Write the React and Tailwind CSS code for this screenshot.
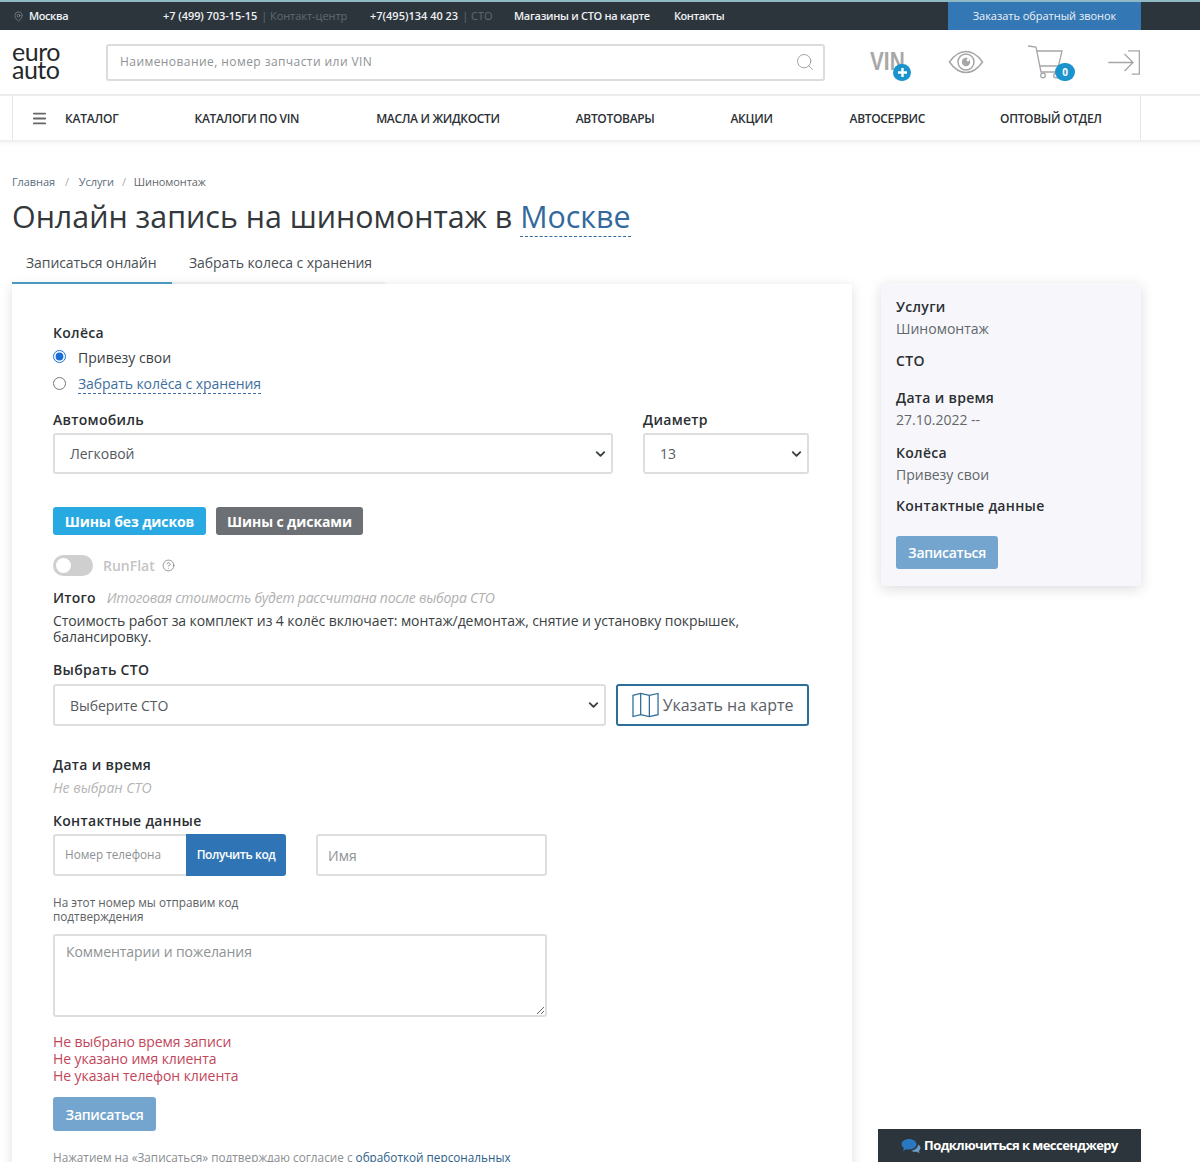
import React from "react";
import { Search, MapPin, CircleHelp, Menu, ChevronDown } from "lucide-react";

const Font = "font-['Open_Sans','Noto_Sans',sans-serif]";

function TopBar() {
  return (
    <div className="h-[30px] bg-[#2d353c] border-t-2 border-[#8fb9c4] flex text-[11px] font-semibold text-[#eef1f3]">
      <div className="flex items-center w-[163px] pl-[13px] gap-[5px] tracking-[-0.4px]">
        <MapPin size={11} strokeWidth={1.2} className="text-[#9aa3a9]" />
        <span>Москва</span>
      </div>
      <div className="flex items-center w-[207px] gap-[4px] tracking-[-0.06px]">
        <span>+7 (499) 703-15-15</span>
        <span className="font-normal text-[#5f6b73] tracking-[-0.05px]">| Контакт-центр</span>
      </div>
      <div className="flex items-center w-[144px] gap-[4px] tracking-[0px]">
        <span>+7(495)134 40 23</span>
        <span className="font-normal text-[#5f6b73]">| СТО</span>
      </div>
      <div className="flex items-center w-[160px] tracking-[-0.3px]">Магазины и СТО на карте</div>
      <div className="flex items-center w-[274px] tracking-[-0.45px]">Контакты</div>
      <div className="flex items-center justify-center w-[193px] bg-[#3377b5] font-normal tracking-[-0.03px]">Заказать обратный звонок</div>
    </div>
  );
}

function Header() {
  return (
    <div className="h-[66px] flex items-center bg-white border-b-2 border-[#eceded]">
      <div className="w-[106px] pl-[12px] font-['Lato',sans-serif] text-[25px] leading-[18px] text-[#26292b] tracking-[-0.5px] pb-[5px]">
        <div>euro</div>
        <div>auto</div>
      </div>
      <div className="w-[719px] h-[37px] border-2 border-[#dcdcdc] rounded-[3px] flex items-center justify-between pl-[12px] pr-[8px]">
        <span className="text-[12px] text-[#8e9295] tracking-[0.43px]">Наименование, номер запчасти или VIN</span>
        <Search size={20} strokeWidth={1.1} className="text-[#9a9a9a]" />
      </div>
      <div className="relative ml-[45px] w-[40px] h-[36px] font-['Liberation_Sans',sans-serif] font-bold text-[26px] leading-[34px] text-[#a8a8a8]">
        <span className="inline-block scale-x-[0.8] origin-left">VIN</span>
        <div className="absolute left-[23px] top-[20px] w-[18px] h-[17px] rounded-full bg-[#1b93cc] flex items-center justify-center">
          <svg width="11" height="11" viewBox="0 0 11 11"><path d="M5.5 1v9M1 5.5h9" stroke="#fff" strokeWidth="2.4" /></svg>
        </div>
      </div>
      <svg className="ml-[38px]" width="36" height="26" viewBox="0 0 36 26" fill="none" stroke="#a6a6a6" strokeWidth="1.5">
        <path d="M1.5 13C7 5 12 2.500 18 2.500S29 5 34.500 13C29 21 24 23.500 18 23.500S7 21 1.500 13Z" />
        <circle cx="18" cy="13" r="8" />
        <circle cx="18" cy="13" r="4.200" fill="#a6a6a6" stroke="none" />
        <circle cx="20" cy="11" r="1.400" fill="#fff" stroke="none" />
      </svg>
      <div className="relative ml-[44px] w-[36px] h-[34px]">
        <svg width="36" height="34" viewBox="0 0 36 34" fill="none" stroke="#a6a6a6" strokeWidth="1.3">
          <path d="M0 1l8 1 5 25h18" />
          <path d="M9 6h25l-3.500 15H12" />
          <circle cx="15" cy="30.500" r="2.300" />
          <circle cx="28" cy="30.500" r="2.300" />
        </svg>
        <div className="absolute left-[27px] top-[18px] w-[20px] h-[18px] rounded-full bg-[#1b93cc] text-white text-[10px] font-bold flex items-center justify-center">0</div>
      </div>
      <svg className="ml-[43px]" width="35" height="27" viewBox="0 0 38 30" fill="none" stroke="#a6a6a6" strokeWidth="1.4">
        <path d="M1 15h27M19 5.500L28.500 15 19 24.500" />
        <path d="M23 2h12.500v26H27" />
      </svg>
    </div>
  );
}

function Nav() {
  const items = [
    ["КАТАЛОГИ ПО VIN", "ml-[76px]"],
    ["МАСЛА И ЖИДКОСТИ", "ml-[77px]"],
    ["АВТОТОВАРЫ", "ml-[76px]"],
    ["АКЦИИ", "ml-[76px]"],
    ["АВТОСЕРВИС", "ml-[77px]"],
    ["ОПТОВЫЙ ОТДЕЛ", "ml-[75px]"],
  ];
  return (
    <div className="h-[46px] flex border-b-2 border-[#f0f0f0] shadow-[0_2px_4px_rgba(0,0,0,0.04)] text-[12px] font-semibold text-[#2c3034] tracking-[-0.33px]">
      <div className="ml-[12px] flex items-center border-l border-[#e6e6e6] w-[1129px] border-r pt-[1px]">
        <Menu size={17} strokeWidth={2.5} className="ml-[18px] text-[#666]" />
        <span className="ml-[17px] tracking-[-0.2px]">КАТАЛОГ</span>
        {items.map(([t, c]) => (
          <span key={t} className={c}>{t}</span>
        ))}
      </div>
    </div>
  );
}

const Label = ({ children, className = "" }) => (
  <div className={`text-[14px] font-semibold text-[#2b2f33] leading-[18px] tracking-[0.3px] ${className}`}>{children}</div>
);

const Select = ({ children, className = "", h = "h-[41px]" }) => (
  <div className={`relative ${className}`}>
    <select className={`block w-full ${h} appearance-none border-2 border-[#dedede] rounded-[3px] pl-[15px] pr-[20px] bg-white text-[#555a5f] tracking-[-0.05px]`}>
      {children}
    </select>
    <ChevronDown size={15} strokeWidth={3} className="absolute right-[5px] top-1/2 -translate-y-1/2 text-[#3a3f44] pointer-events-none" />
  </div>
);

function Form() {
  return (
    <div className="w-[840px] bg-white rounded-[3px] shadow-[0_2px_12px_rgba(0,0,0,0.13)] pl-[41px] pr-[42px] pt-[40px] h-[900px] text-[#3a3f44] text-[14px]">
      <Label>Колёса</Label>
      <label className="mt-[5px] flex items-center h-[20px]">
        <input type="radio" name="w" defaultChecked className="w-[13px] h-[13px] ml-0 accent-[#1a6fd6] -mt-[2px]" />
        <span className="ml-[12px]">Привезу свои</span>
      </label>
      <label className="mt-[7px] flex items-center h-[20px]">
        <input type="radio" name="w" className="w-[13px] h-[13px] -mt-[2px]" />
        <span className="ml-[12px] text-[#3f6f9e] border-b border-dashed border-[#3f6f9e] leading-[18px] tracking-[-0.08px]">Забрать колёса с хранения</span>
      </label>
      <div className="mt-[17px] flex gap-[30px]">
        <div className="w-[560px]">
          <Label>Автомобиль</Label>
          <Select className="mt-[4px]"><option>Легковой</option></Select>
        </div>
        <div className="w-[166px]">
          <Label>Диаметр</Label>
          <Select className="mt-[4px]"><option>13</option></Select>
        </div>
      </div>
      <div className="mt-[33px] flex gap-[10px] text-[14px] font-bold text-white tracking-[-0.1px]">
        <button className="h-[28px] w-[153px] rounded-[3px] bg-[#29a9e2]">Шины без дисков</button>
        <button className="h-[28px] w-[147px] rounded-[3px] bg-[#6c7074]">Шины с дисками</button>
      </div>
      <div className="mt-[19px] flex items-center h-[22px] text-[#c4c4c4] font-semibold">
        <div className="w-[40px] h-[21px] rounded-full bg-[#cfcfcf] relative">
          <div className="absolute left-[3px] top-[3px] w-[15px] h-[15px] rounded-full bg-white"></div>
        </div>
        <span className="ml-[10px]">RunFlat</span>
        <CircleHelp size={13} strokeWidth={1.4} className="ml-[7px] text-[#777]" />
      </div>
      <div className="mt-[11px] flex items-center h-[20px]">
        <span className="font-semibold text-[#2b2f33] tracking-[0.2px]">Итого</span>
        <span className="ml-[11px] italic text-[#b0b0b0] tracking-[-0.23px]">Итоговая стоимость будет рассчитана после выбора СТО</span>
      </div>
      <p className="mt-[6px] w-[756px] leading-[16px] tracking-[-0.08px] text-[#3a3f44]">
        Стоимость работ за комплект из 4 колёс включает: монтаж/демонтаж, снятие и установку покрышек, балансировку.
      </p>
      <Label className="mt-[16px]">Выбрать СТО</Label>
      <div className="mt-[5px] flex gap-[10px]">
        <Select className="w-[553px]" h="h-[42px]"><option>Выберите СТО</option></Select>
        <button className="w-[193px] h-[42px] border-2 border-[#2d6f99] rounded-[3px] flex items-center justify-center gap-[4px] text-[16px] text-[#5a6066] tracking-[-0.05px]">
          <svg width="27" height="26" viewBox="0 0 28 26" fill="none" stroke="#2d6f99" strokeWidth="1.300">
            <path d="M1 3l8-2 9 2 9-2v22l-9 2-9-2-8 2Z" />
            <path d="M9 1v22M18 3v22" />
          </svg>
          Указать на карте
        </button>
      </div>
      <Label className="mt-[30px]">Дата и время</Label>
      <div className="mt-[5px] italic text-[#b5b5b5] leading-[18px]">Не выбран СТО</div>
      <Label className="mt-[15px]">Контактные данные</Label>
      <div className="mt-[4px] flex gap-[30px]">
        <div className="flex w-[233px] h-[42px]">
          <input placeholder="Номер телефона" className="w-[133px] border-2 border-r-0 border-[#dedede] rounded-l-[3px] pl-[10px] text-[11.75px] placeholder:text-[#8e9295] outline-none" />
          <button className="w-[100px] bg-[#2f75b5] rounded-r-[3px] text-white text-[12px] font-semibold tracking-[-0.42px]">Получить код</button>
        </div>
        <input placeholder="Имя" className="w-[231px] h-[42px] border-2 border-[#dedede] rounded-[3px] pl-[10px] placeholder:text-[#8e9295] outline-none" />
      </div>
      <p className="mt-[19px] w-[200px] text-[11.75px] leading-[14px] text-[#5d6266]">На этот номер мы отправим код подтверждения</p>
      <textarea placeholder="Комментарии и пожелания" className="block mt-[11px] w-[494px] h-[83px] border-2 border-[#dedede] rounded-[3px] pl-[11px] pr-[12px] py-[5px] tracking-[-0.08px] placeholder:text-[#8e9295] outline-none"></textarea>
      <div className="mt-[16px] text-[#c2465a] leading-[17px] tracking-[-0.08px]">
        <div>Не выбрано время записи</div>
        <div>Не указано имя клиента</div>
        <div>Не указан телефон клиента</div>
      </div>
      <button className="mt-[13px] w-[103px] h-[34px] rounded-[3px] bg-[#74a5cf] text-white font-semibold tracking-[-0.3px]">Записаться</button>
      <p className="mt-[18px] whitespace-nowrap text-[11.75px] leading-[16px] text-[#8a8e92]">
        Нажатием на «Записаться» подтверждаю согласие с <span className="text-[#2e5f8a]">обработкой персональных</span>
      </p>
    </div>
  );
}

function Sidebar() {
  const H = ({ children, className = "" }) => <div className={`font-semibold text-[#2b2f33] leading-[18px] tracking-[0.3px] ${className}`}>{children}</div>;
  const V = ({ children }) => <div className="mt-[4px] text-[#62676b] leading-[18px]">{children}</div>;
  return (
    <div className="w-[260px] h-[303px] ml-[29px] -mt-[1px] bg-[#f7f7fb] rounded-[4px] shadow-[0_3px_14px_rgba(0,0,0,0.14)] pl-[15px] pt-[15px] text-[14px]">
      <H>Услуги</H>
      <V>Шиномонтаж</V>
      <H className="mt-[14px]">СТО</H>
      <H className="mt-[19px]">Дата и время</H>
      <V>27.10.2022 --</V>
      <H className="mt-[15px]">Колёса</H>
      <V>Привезу свои</V>
      <H className="mt-[13px]">Контактные данные</H>
      <button className="mt-[21px] block w-[102px] h-[33px] rounded-[3px] bg-[#74a5cf] text-white font-semibold tracking-[-0.3px]">Записаться</button>
    </div>
  );
}

export default function App() {
  return (
    <div className={`relative w-[1200px] h-[1162px] overflow-hidden bg-white ${Font}`}>
      <TopBar />
      <Header />
      <Nav />
      <div className="pl-[12px] pt-[32px]">
        <div className="text-[11px] leading-[16px] text-[#5a6d7c] tracking-[-0.1px] flex">
          <span>Главная</span>
          <span className="mx-[10px] text-[#aaa]">/</span>
          <span>Услуги</span>
          <span className="mx-[8px] text-[#aaa]">/</span>
          <span className="text-[#62676b]">Шиномонтаж</span>
        </div>
        <h1 className="mt-[7px] text-[30.4px] leading-[40px] text-[#33383c] font-normal">
          Онлайн запись на шиномонтаж в{" "}
          <span className="text-[#33699c] border-b border-dashed border-[#33699c] inline-block leading-[39px]">Москве</span>
        </h1>
        <div className="mt-[6px] flex text-[14px] text-[#4a4f54] h-[41px] tracking-[-0.08px]">
          <div className="w-[160px] border-b-2 border-[#4d9ec4] pl-[14px] pt-[9px]">Записаться онлайн</div>
          <div className="w-[213px] border-b-2 border-[#f3f3f3] pl-[17px] pt-[9px]">Забрать колеса с хранения</div>
        </div>
        <div className="flex items-start">
          <Form />
          <Sidebar />
        </div>
      </div>
      <div className="absolute left-[878px] bottom-0 w-[263px] h-[33px] bg-[#2d353c] flex items-center justify-center gap-[3px] text-white text-[13px] font-bold tracking-[-0.55px]">
        <svg width="20" height="16" viewBox="0 0 20 16">
          <path d="M8 1c4 0 7.500 2.300 7.500 5.300S12 11.500 8 11.500c-.9 0-1.700-.1-2.500-.3L2 13l1-3C1.500 9 .5 7.700.5 6.300.5 3.300 4 1 8 1Z" fill="#2a78c2" />
          <path d="M17 6.500c1.600.9 2.500 2.100 2.500 3.500 0 1.100-.6 2.100-1.600 2.900l.6 2.300-2.800-1.400c-2 .4-4.300 0-5.700-1.200 3.500-.2 7-2.500 7-6.100Z" fill="#6a9ac8" />
        </svg>
        Подключиться к мессенджеру
      </div>
    </div>
  );
}
